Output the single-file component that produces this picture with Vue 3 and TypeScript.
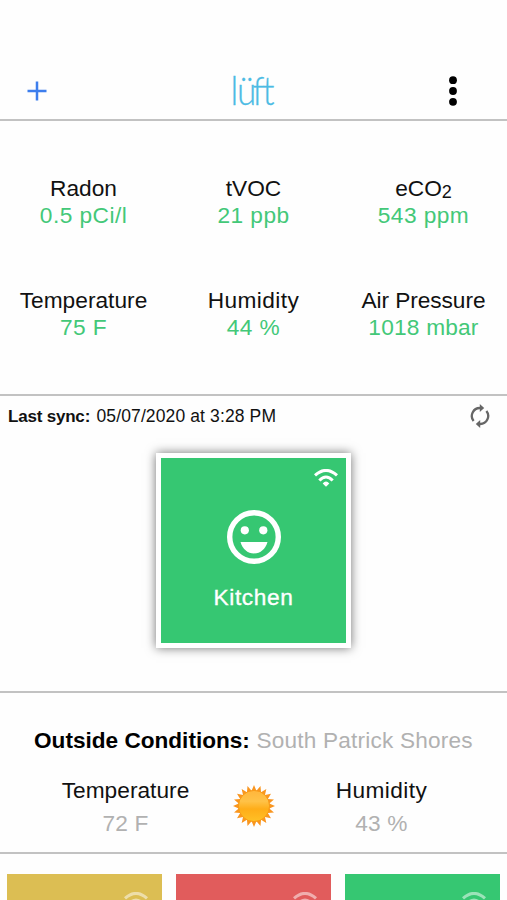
<script setup lang="ts">
interface Reading {
  label: string
  sub?: string
  value: string
  kind: string
}

const readings: Reading[] = [
  { label: 'Radon', value: '0.5 pCi/l', kind: 'radon' },
  { label: 'tVOC', value: '21 ppb', kind: 'tvoc' },
  { label: 'eCO', sub: '2', value: '543 ppm', kind: 'eco' },
  { label: 'Temperature', value: '75 F', kind: 'temperature' },
  { label: 'Humidity', value: '44 %', kind: 'humidity' },
  { label: 'Air Pressure', value: '1018 mbar', kind: 'pressure' },
]

const rooms: string[] = ['yellow', 'red', 'green']

// Alternating outer and inner vertices of the sun's rays
const rays: string = Array.from({ length: 40 }, (_, i) => {
  const radius = i % 2 === 0 ? 21 : 15.5
  const angle = (i * Math.PI) / 20 - Math.PI / 2
  return `${(21 + radius * Math.cos(angle)).toFixed(2)},${(21 + radius * Math.sin(angle)).toFixed(2)}`
}).join(' ')
</script>

<template>
  <main class="screen">
    <header class="header">
      <button class="icon-button add" aria-label="Add device">
        <svg width="20" height="20" viewBox="0 0 20 20"><path d="M10 .5v19M.5 10h19" stroke="#3d7eed" stroke-width="2.5" /></svg>
      </button>
      <svg class="logo" width="60" height="58" viewBox="0 0 60 58">
        <text x="7.1 14.4 31.7 42.9" y="43" transform="scale(0.9 1)">lüft</text>
      </svg>
      <button class="icon-button more" aria-label="Menu">
        <svg width="8" height="30" viewBox="0 0 8 30"><circle cx="4" cy="4.2" r="3.9" /><circle cx="4" cy="15" r="3.9" /><circle cx="4" cy="25.8" r="3.9" /></svg>
      </button>
    </header>

    <section class="readings">
      <div v-for="r in readings" :key="r.label" class="reading" :class="r.kind">
        <div class="label">{{ r.label }}<span v-if="r.sub" class="sub">{{ r.sub }}</span></div>
        <div class="value">{{ r.value }}</div>
      </div>
    </section>

    <section class="device">
      <div class="sync">
        <span class="sync-title">Last sync:</span>
        <span class="sync-time">05/07/2020 at 3:28 PM</span>
        <svg class="refresh" width="20" height="24" viewBox="0 0 20 24">
          <g fill="none" stroke="#666" stroke-width="2.3">
            <path d="M3.6 17A8 8 0 0 1 10 4h1" />
            <path d="M16.4 7A8 8 0 0 1 10 20H9" />
          </g>
          <path d="M9.8 0l4.4 4-4.4 4zM10.2 16l-4.4 4 4.4 4z" fill="#666" />
        </svg>
      </div>
      <div class="card">
        <svg class="wifi" width="24" height="17.5" viewBox="0 0 72 52">
          <path d="M3 19Q36-11 69 19M16 34Q36 13 56 34" fill="none" stroke="#fff" stroke-width="9" />
          <path d="M26 43Q36 32 46 43L36 53Z" fill="#fff" />
        </svg>
        <svg class="face" width="54" height="54" viewBox="0 0 54 54">
          <circle cx="27" cy="27" r="24.3" fill="none" stroke="#fff" stroke-width="5.4" />
          <circle cx="17.8" cy="20.3" r="4.1" fill="#fff" />
          <circle cx="36.3" cy="20.3" r="4.1" fill="#fff" />
          <path d="M13.5 32h27c-2 6.8-7 11.5-13.5 11.5s-11.500-4.700-13.500-11.500z" fill="#fff" />
        </svg>
        <div class="room">Kitchen</div>
      </div>
    </section>

    <section class="outside">
      <h2 class="outside-title"><strong>Outside Conditions:</strong><span>South Patrick Shores</span></h2>
      <div class="weather">
        <div class="condition temperature">
          <div class="label">Temperature</div>
          <div class="muted">72 F</div>
        </div>
        <svg class="sun" width="42" height="42" viewBox="0 0 42 42">
          <defs>
            <linearGradient id="disc" x1="0" y1="0" x2="0" y2="1">
              <stop offset="0" stop-color="#ffb63c" />
              <stop offset=".35" stop-color="#ffc247" />
              <stop offset=".6" stop-color="#ffad18" />
              <stop offset="1" stop-color="#ffc126" />
            </linearGradient>
          </defs>
          <polygon :points="rays" fill="#f9951f" />
          <circle cx="21" cy="21" r="15.6" fill="url(#disc)" stroke="#f99a16" stroke-width="1" />
        </svg>
        <div class="condition humidity">
          <div class="label">Humidity</div>
          <div class="muted">43 %</div>
        </div>
      </div>
    </section>

    <section class="rooms">
      <div v-for="room in rooms" :key="room" class="tile" :class="room">
        <svg class="tile-wifi" width="24" height="17.5" viewBox="0 0 72 52">
          <path d="M3 19Q36-11 69 19M16 34Q36 13 56 34" fill="none" stroke="#fff" stroke-width="9" />
          <path d="M26 43Q36 32 46 43L36 53Z" fill="#fff" />
        </svg>
      </div>
    </section>
  </main>
</template>

<style>
body {
  background: #fff;
  overflow: hidden;
}
</style>

<style scoped>
.screen {
  box-sizing: border-box;
  width: 507px;
  height: 900px;
  overflow: hidden;
  background: #fefefe;
  color: #111;
  font-family: "Liberation Sans", Arial, sans-serif;
  font-size: 22.7px;
  line-height: 27px;
}
.header {
  box-sizing: border-box;
  height: 121px;
  padding: 62px 50px 0 27px;
  border-bottom: 2px solid #c2c2c2;
  display: flex;
  align-items: center;
  justify-content: space-between;
}
.icon-button {
  border: 0;
  padding: 0;
  background: none;
  display: flex;
}
.logo {
  display: block;
  margin-left: 11px;
}
.logo text {
  font-family: Lato, sans-serif;
  font-weight: 300;
  font-size: 39px;
  fill: #4cbbe4;
  stroke: #4cbbe4;
  stroke-width: 0.3px;
}
.readings {
  box-sizing: border-box;
  height: 275px;
  padding-top: 54px;
  border-bottom: 2px solid #c2c2c2;
  display: grid;
  grid-template-columns: repeat(3, 170px);
  grid-auto-rows: 112px;
  justify-content: center;
  text-align: center;
}
.reading {
  white-space: nowrap;
}
.label {
  letter-spacing: 0;
}
.value {
  color: #43c878;
  letter-spacing: 0.45px;
}
.temperature .label {
  letter-spacing: 0.02px;
}
.humidity .label {
  letter-spacing: 0.4px;
}
.pressure .label {
  letter-spacing: -0.08px;
}
.pressure .value {
  letter-spacing: 0.2px;
}
.sub {
  font-size: 18px;
  line-height: 0;
  position: relative;
  top: 2px;
}
.device {
  box-sizing: border-box;
  height: 297px;
  border-bottom: 2px solid #c2c2c2;
}
.sync {
  height: 57px;
  box-sizing: border-box;
  padding: 7px 17px 0 8px;
  display: flex;
  align-items: flex-start;
  font-size: 17px;
}
.sync-title {
  font-weight: bold;
  letter-spacing: -0.2px;
  width: 88.5px;
  white-space: nowrap;
}
.sync-time {
  font-size: 17.5px;
  letter-spacing: 0.12px;
}
.refresh {
  margin: 1px 0 0 auto;
}
.card {
  position: relative;
  box-sizing: border-box;
  width: 195px;
  height: 195px;
  margin: 0 auto;
  border: 5px solid #fff;
  background: #36c772;
  box-shadow: 0 0 10px rgba(0, 0, 0, 0.55);
  display: flex;
  flex-direction: column;
  align-items: center;
  color: #fff;
}
.wifi {
  position: absolute;
  top: 11px;
  right: 8px;
}
.face {
  margin-top: 52px;
}
.room {
  margin-top: 20px;
  -webkit-text-stroke: 0.35px #fff;
  letter-spacing: 0.6px;
}
.outside {
  box-sizing: border-box;
  height: 161px;
  padding-top: 34px;
  border-bottom: 2px solid #c2c2c2;
}
.outside-title {
  margin: 0 0 23px;
  padding-left: 34px;
  display: flex;
  font-size: 22.6px;
  font-weight: normal;
  line-height: 27px;
  white-space: nowrap;
}
.outside-title strong {
  width: 222.5px;
  color: #000;
}
.outside-title span {
  letter-spacing: 0.2px;
}
.outside-title span,
.muted {
  color: #b1b1b1;
}
.weather {
  display: grid;
  grid-template-columns: 128px 42px 128px;
  column-gap: 43px;
  justify-content: center;
  text-align: center;
}
.sun {
  margin-top: 8px;
}
.muted {
  margin-top: 6px;
  letter-spacing: 0.2px;
}
.rooms {
  display: grid;
  grid-template-columns: repeat(3, 155px);
  justify-content: center;
  column-gap: 14px;
  padding-top: 20px;
}
.tile {
  height: 155px;
  display: flex;
  justify-content: flex-end;
}
.tile-wifi {
  margin: 18px 14px 0 0;
  opacity: 0.5;
}
.yellow { background: #dcbe53; }
.red { background: #e15c5c; }
.green { background: #36c772; }
</style>
